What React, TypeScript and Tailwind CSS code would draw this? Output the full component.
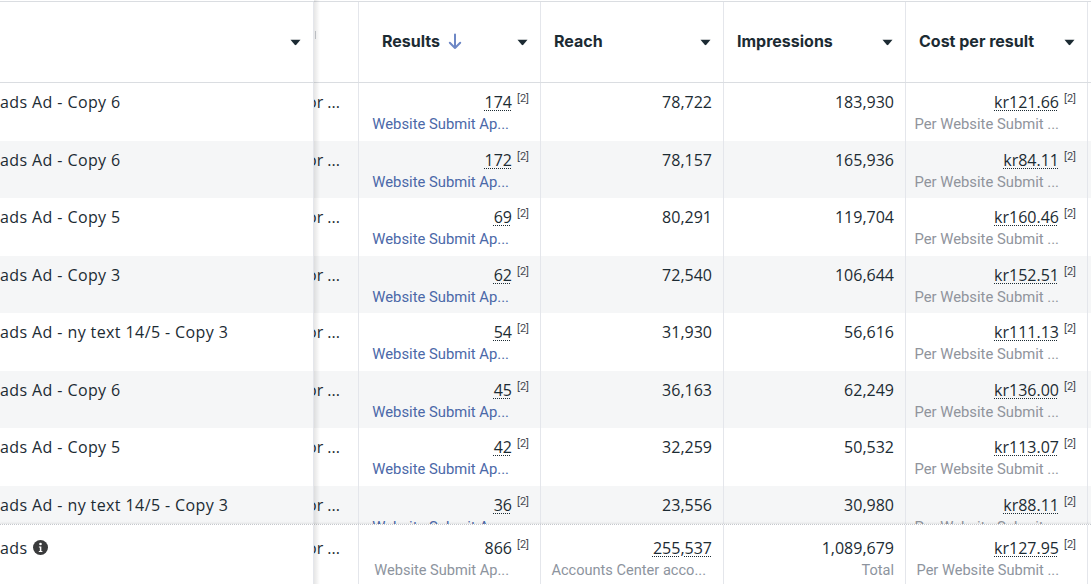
import React from "react";

type Row = {
  name: string;
  results: string;
  reach: string;
  impressions: string;
  cost: string;
};

const rows: Row[] = [
  { name: "ads Ad - Copy 6", results: "174", reach: "78,722", impressions: "183,930", cost: "kr121.66" },
  { name: "ads Ad - Copy 6", results: "172", reach: "78,157", impressions: "165,936", cost: "kr84.11" },
  { name: "ads Ad - Copy 5", results: "69", reach: "80,291", impressions: "119,704", cost: "kr160.46" },
  { name: "ads Ad - Copy 3", results: "62", reach: "72,540", impressions: "106,644", cost: "kr152.51" },
  { name: "ads Ad - ny text 14/5 - Copy 3", results: "54", reach: "31,930", impressions: "56,616", cost: "kr111.13" },
  { name: "ads Ad - Copy 6", results: "45", reach: "36,163", impressions: "62,249", cost: "kr136.00" },
  { name: "ads Ad - Copy 5", results: "42", reach: "32,259", impressions: "50,532", cost: "kr113.07" },
  { name: "ads Ad - ny text 14/5 - Copy 3", results: "36", reach: "23,556", impressions: "30,980", cost: "kr88.11" },
];

const gridCols = "grid grid-cols-[314px_45px_182px_183px_182px_182px_1fr]";
const bodyFont = { fontFamily: '"Open Sans", "Noto Sans", sans-serif' };
const subFont = { fontFamily: 'Roboto, "Liberation Sans", sans-serif' };
const headFont = { fontFamily: 'Inter, "Liberation Sans", sans-serif' };
const dottedCls = "underline decoration-dotted decoration-1 decoration-[#1c2b33] underline-offset-[2px]";

const Caret = () => (
  <svg width="11" height="7" viewBox="0 0 11 7" className="shrink-0">
    <path d="M0.5 0.8 L10.5 0.8 L6.3 5.8 Q5.5 6.6 4.7 5.8 Z" fill="#1c2b33" />
  </svg>
);

const SortArrow = () => (
  <svg width="14" height="17" viewBox="0 0 14 17" className="ml-[8px]">
    <path d="M7 1.5 V15 M1.8 9.8 L7 15 L12.2 9.8" stroke="#6d87c5" strokeWidth="2" fill="none" strokeLinecap="round" strokeLinejoin="round" />
  </svg>
);

const InfoIcon = () => (
  <svg width="15" height="15" viewBox="0 0 16 16" className="ml-[5px]">
    <circle cx="8" cy="8" r="8" fill="#3a3b3c" />
    <circle cx="8" cy="4.3" r="1.4" fill="#fff" />
    <path d="M6.3 6.8 H8.9 V11.6 H10 V12.8 H6.2 V11.6 H7.3 V8 H6.3 Z" fill="#fff" />
  </svg>
);

const Sup = () => (
  <span className="ml-[5px] mt-[2px] text-[11px] leading-none text-[#444950]" style={subFont}>
    [2]
  </span>
);

function NumCell({
  value,
  sub,
  subColor,
  sup,
  dotted,
  subPad,
}: {
  value: string;
  sub?: string;
  subColor?: string;
  sup?: boolean;
  dotted?: boolean;
  subPad?: string;
}) {
  return (
    <div className="border-r border-[#e4e6eb] flex flex-col items-end pr-[11px] pt-[8px] overflow-hidden">
      <div className="flex items-start text-[16px] leading-[22px] text-[#1c2b33]" style={bodyFont}>
        <span className={dotted ? dottedCls : ""}>{value}</span>
        {sup ? <Sup /> : null}
      </div>
      {sub ? (
        <div className={`text-[14.8px] leading-[18px] mt-[2px] whitespace-nowrap ${subPad ?? ""}`} style={{ ...subFont, color: subColor }}>
          {sub}
        </div>
      ) : null}
    </div>
  );
}

function HeaderCell({ label, sort, padLeft }: { label?: string; sort?: boolean; padLeft: string }) {
  return (
    <div className={`border-r border-[#e4e6eb] flex items-center justify-between pr-[12px] ${padLeft}`}>
      <div className="flex items-center text-[16px] font-bold text-[#1c2b33] -mt-[2px]" style={headFont}>
        {label}
        {sort ? <SortArrow /> : null}
      </div>
      <Caret />
    </div>
  );
}

function FootCell({
  value,
  sub,
  sup,
  dotted,
  subPad,
}: {
  value: string;
  sub: string;
  sup?: boolean;
  dotted?: boolean;
  subPad?: string;
}) {
  return (
    <div className="border-r border-[#e4e6eb] flex flex-col items-end pr-[11px] pt-[12px] overflow-hidden">
      <div className="flex items-start text-[16px] leading-[22px] text-[#1c2b33]" style={bodyFont}>
        <span className={dotted ? dottedCls : ""}>{value}</span>
        {sup ? <Sup /> : null}
      </div>
      <div className={`text-[14.6px] leading-[18px] mt-[2px] whitespace-nowrap text-[#8d949e] ${subPad ?? ""}`} style={subFont}>
        {sub}
      </div>
    </div>
  );
}

export default function App() {
  return (
    <div className="relative w-[1091px] h-[584px] overflow-hidden bg-white flex flex-col">
      {/* header */}
      <div className={`${gridCols} h-[82px] mt-px border-t border-b border-[#dadde1] shrink-0`}>
        <div className="border-r border-[#e4e6eb] flex items-center justify-end pr-[12px]">
          <Caret />
        </div>
        <div className="border-r border-[#e4e6eb] relative">
          <div className="absolute left-[1px] top-[29px] w-px h-[8px] bg-[#c9ccd1]" />
        </div>
        <HeaderCell label="Results" sort padLeft="pl-[23px]" />
        <HeaderCell label="Reach" padLeft="pl-[13px]" />
        <HeaderCell label="Impressions" padLeft="pl-[13px]" />
        <HeaderCell label="Cost per result" padLeft="pl-[13px]" />
        <div />
      </div>

      {/* body */}
      <div className="flex-1 overflow-hidden">
        {rows.map((r, i) => (
          <div key={i} className={`${gridCols} h-[57.5px] ${i % 2 === 1 ? "bg-[#f5f6f7]" : "bg-white"}`}>
            <div className="border-r border-[#e4e6eb] pt-[8px] text-[16px] leading-[22px] tracking-[0.4px] text-[#1c2b33] whitespace-nowrap overflow-hidden" style={bodyFont}>
              {r.name}
            </div>
            <div className="border-r border-[#e4e6eb] pt-[8px] text-[16px] leading-[22px] text-[#1c2b33] whitespace-nowrap overflow-hidden" style={bodyFont}>
              <span className="-ml-[7px]">or ...</span>
            </div>
            <NumCell value={r.results} sup dotted sub="Website Submit Ap..." subColor="#4b68a8" subPad="mr-[20px]" />
            <NumCell value={r.reach} />
            <NumCell value={r.impressions} />
            <NumCell value={r.cost} sup dotted sub="Per Website Submit ..." subColor="#90949c" subPad="mr-[17px]" />
            <div />
          </div>
        ))}
      </div>

      {/* footer totals */}
      <div className={`${gridCols} h-[60px] shrink-0 bg-white border-t border-dotted border-[#c4c7cc] shadow-[0_-1px_2px_rgba(0,0,0,0.08)] relative`}>
        <div className="border-r border-[#e4e6eb] pt-[12px] flex items-start text-[16px] leading-[22px] tracking-[0.4px] text-[#1c2b33]" style={bodyFont}>
          <span>ads</span>
          <span className="mt-[3px]">
            <InfoIcon />
          </span>
        </div>
        <div className="border-r border-[#e4e6eb] pt-[12px] text-[16px] leading-[22px] text-[#1c2b33] whitespace-nowrap overflow-hidden" style={bodyFont}>
          <span className="-ml-[7px]">or ...</span>
        </div>
        <FootCell value="866" sup sub="Website Submit Ap..." subPad="mr-[20px]" />
        <FootCell value="255,537" dotted sub="Accounts Center acco..." subPad="mr-[6px]" />
        <FootCell value="1,089,679" sub="Total" />
        <FootCell value="kr127.95" sup dotted sub="Per Website Submit ..." subPad="mr-[17px]" />
        <div />
      </div>

      {/* pinned column shadow */}
      <div className="pointer-events-none absolute top-0 bottom-0 left-[314px] w-[6px] bg-gradient-to-r from-black/10 to-transparent" />
    </div>
  );
}
